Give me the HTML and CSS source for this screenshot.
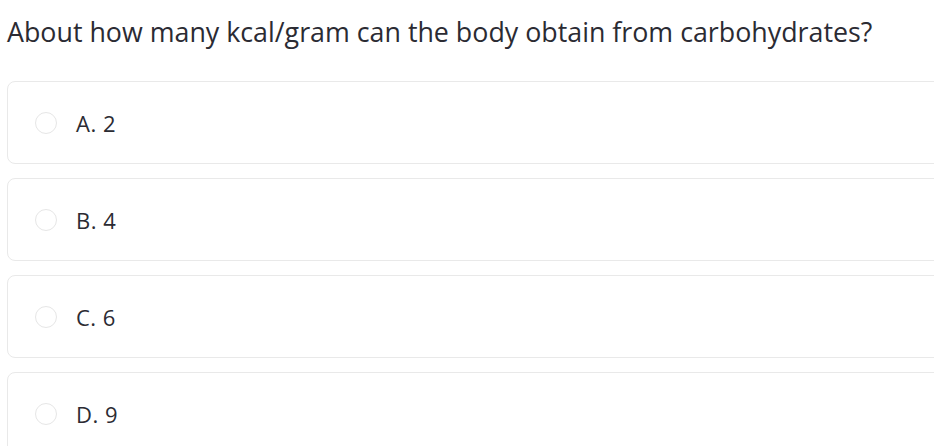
FILE: index.html
```html
<!DOCTYPE html>
<html lang="en">
<head>
  <meta charset="UTF-8">
  <meta name="viewport" content="width=device-width, initial-scale=1.0">
  <title>Question</title>
  <link rel="stylesheet" href="styles.css">
</head>
<body>
  <div class="question">
    <h1 class="prompt">About how many kcal/gram can the body obtain from carbohydrates?</h1>

    <div class="choices">
      <label class="choice">
        <span class="radio"></span>
        <span class="choice-text">A. 2</span>
      </label>
      <label class="choice">
        <span class="radio"></span>
        <span class="choice-text">B. 4</span>
      </label>
      <label class="choice">
        <span class="radio"></span>
        <span class="choice-text">C. 6</span>
      </label>
      <label class="choice">
        <span class="radio"></span>
        <span class="choice-text">D. 9</span>
      </label>
    </div>
  </div>
</body>
</html>
```

FILE: styles.css
```css
body {
  font-family: "Open Sans", Arial, sans-serif;
  margin: 0;
  padding: 0;
  background-color: #fff;
  color: #2b2b33;
  overflow: hidden;
}
.question {
  padding: 15px 0 0 7px;
}
.prompt {
  font-size: 26.8px;
  font-weight: normal;
  margin: 0 0 32px 0;
  line-height: 34px;
}
.choices {
  display: flex;
  flex-direction: column;
  gap: 14px;
}
.choice {
  display: flex;
  align-items: center;
  width: 960px;
  height: 81px;
  border: 1px solid #e9e9e9;
  border-radius: 8px;
  box-sizing: content-box;
}
.radio {
  width: 20px;
  height: 20px;
  margin-left: 27px;
  border: 1px solid #e6e6e6;
  border-radius: 50%;
}
.choice-text {
  margin-left: 19px;
  font-size: 22px;
  letter-spacing: 0.5px;
}
```
